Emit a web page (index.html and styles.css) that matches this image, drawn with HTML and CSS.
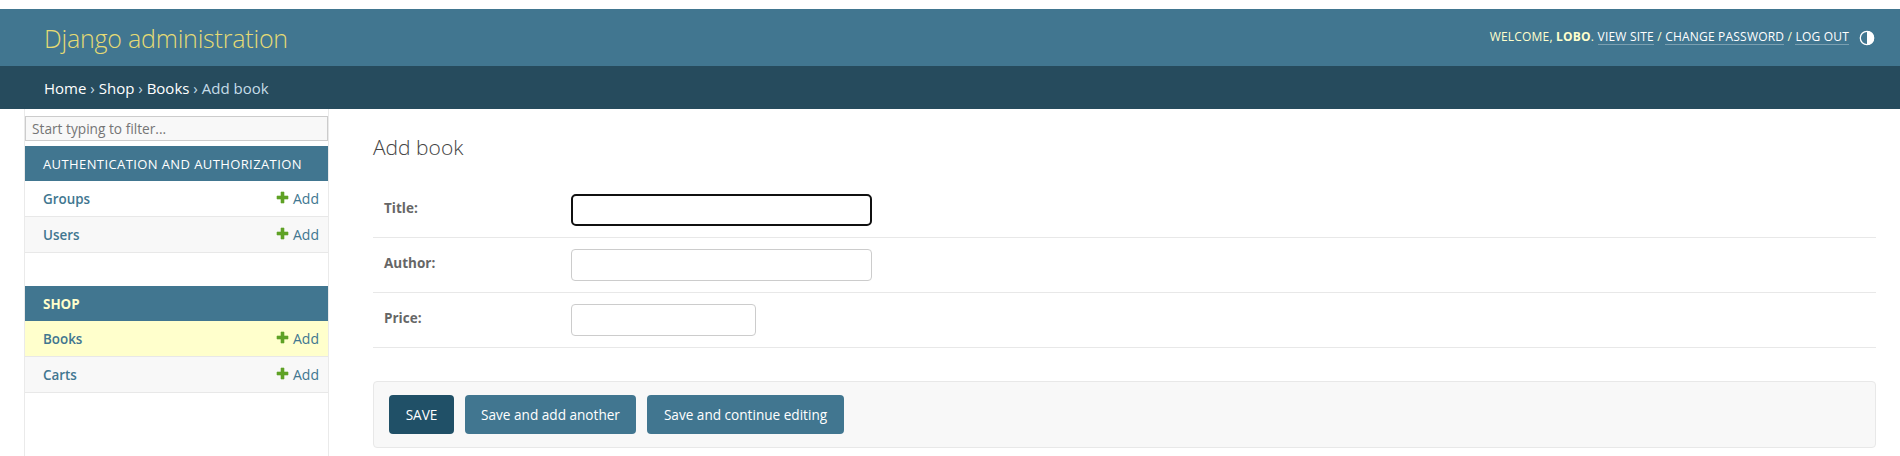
FILE: index.html
```html
<!DOCTYPE html>
<html lang="en">
<head>
<meta charset="utf-8">
<title>Add book | Django site admin</title>
<link rel="stylesheet" href="styles.css">
</head>
<body>
<svg class="defs" width="0" height="0"><symbol id="plus" viewBox="0 0 13 13"><path fill="#5fa225" d="M5 1h3v4h4v3H8v4H5V8H1V5h4z" stroke="#5fa225" stroke-width=".6" stroke-linejoin="round"/></symbol></svg>
<header class="header">
  <div class="branding"><span>Django administration</span></div>
  <div class="tools">
    <span class="welcome">WELCOME, <strong>LOBO</strong>. <a>VIEW SITE</a> / <a>CHANGE PASSWORD</a> / <a>LOG OUT</a></span>
    <svg class="theme" viewBox="0 0 16 16"><circle cx="8" cy="8" r="6.7" fill="none" stroke="#fff" stroke-width="1.3"/><path fill="#fff" d="M8 1a7 7 0 0 1 0 14z"/></svg>
  </div>
</header>
<nav class="breadcrumbs"><span><a>Home</a> › <a>Shop</a> › <a>Books</a> › Add book</span></nav>
<div class="main">
  <aside class="sidebar">
    <input class="filter" type="text" placeholder="Start typing to filter...">
    <section class="module">
      <h2 class="caption"><span class="cap-auth">AUTHENTICATION AND AUTHORIZATION</span></h2>
      <div class="row"><a class="model">Groups</a><a class="add"><svg class="plus"><use href="#plus"/></svg><span>Add</span></a></div>
      <div class="row alt"><a class="model">Users</a><a class="add"><svg class="plus"><use href="#plus"/></svg><span>Add</span></a></div>
    </section>
    <section class="module">
      <h2 class="caption section"><span>SHOP</span></h2>
      <div class="row current"><a class="model">Books</a><a class="add"><svg class="plus"><use href="#plus"/></svg><span>Add</span></a></div>
      <div class="row alt"><a class="model">Carts</a><a class="add"><svg class="plus"><use href="#plus"/></svg><span>Add</span></a></div>
    </section>
  </aside>
  <main class="content">
    <h1 class="title"><span>Add book</span></h1>
    <div class="field"><label>Title:</label><input class="text focused" type="text"></div>
    <div class="field"><label>Author:</label><input class="text" type="text"></div>
    <div class="field"><label>Price:</label><input class="text number" type="text"></div>
    <div class="submit">
      <button class="btn default"><span>SAVE</span></button>
      <button class="btn another"><span>Save and add another</span></button>
      <button class="btn continue"><span>Save and continue editing</span></button>
    </div>
  </main>
</div>
</body>
</html>
```
FILE: styles.css
```css
* { box-sizing: border-box; }
body { margin: 0; padding-top: 9px; height: 456px; overflow: hidden; background: #fff; color: #333; font: 14px/18px "Open Sans", "Noto Sans", sans-serif; display: flex; flex-direction: column; }
.defs { display: block; flex: none; height: 0; }
.header { flex: none; height: 57px; padding: 0 25px 0 44px; background: #417690; display: flex; justify-content: space-between; align-items: center; }
.branding { color: #e6db74; font-size: 25px; font-weight: 300; line-height: 32px; letter-spacing: -0.2px; padding-top: 1px; }
.tools { display: flex; align-items: center; color: #ffc; font-size: 12px; letter-spacing: 0.2px; margin-bottom: 1px; }
.welcome { white-space: nowrap; line-height: 14px; }
.tools a { display: inline-block; color: #fff; border-bottom: 1px solid rgba(255,255,255,.3); }
.theme { width: 16px; height: 16px; margin: 2px 0 0 10px; }
.breadcrumbs { flex: none; height: 43px; padding: 1px 44px 0; background: #264b5d; color: #c4dce8; display: flex; align-items: center; font-size: 15px; }
.breadcrumbs a { color: #fff; }
.main { flex: 1; display: flex; min-height: 0; }
.sidebar { flex: none; width: 305px; margin-left: 24px; border: solid #eaeaea; border-width: 0 1px; padding-top: 7px; }
.filter { display: block; width: 100%; height: 25px; margin-bottom: 5px; padding: 0 6px; border: 1px solid #ccc; background: #f8f8f8; font: 13.7px "Open Sans", sans-serif; }
.filter::placeholder { color: #757575; }
.module { margin-bottom: 33px; }
.caption { margin: 0; height: 35px; padding-left: 18px; background: #417690; color: #fff; font-size: 13px; font-weight: 400; letter-spacing: 0.4px; display: flex; align-items: center; }
.section { color: #ffc; font-weight: 700; font-size: 13.4px; letter-spacing: 0; }
.row { height: 36px; padding: 0 9px 0 18px; border-bottom: 1px solid #e8e8e8; display: flex; align-items: center; justify-content: space-between; color: #417690; }
.alt { background: #f8f8f8; }
.current { background: #ffc; }
.model { font-weight: 600; font-size: 13.4px; }
.add { display: flex; align-items: center; gap: 4px; font-size: 14px; }
.plus { width: 13px; height: 13px; margin-bottom: 3px; }
.content { flex: 1; min-width: 0; margin: 0 24px 0 44px; padding-top: 25px; }
.title { margin: 0 0 21px; height: 26px; font-size: 21px; line-height: 26px; font-weight: 300; color: #444; }
.field { height: 55px; padding: 11px 11px 0; border-bottom: 1px solid #e8e8e8; display: flex; }
.title + .field { height: 57px; padding-top: 13px; }
.field label { flex: none; width: 187px; padding-top: 5px; font-size: 13.5px; font-weight: 700; color: #666; }
.text { width: 301px; height: 32px; margin: 0; border: 1px solid #ccc; border-radius: 4px; background: #fff; outline: none; }
.focused { border: 2px solid #101010; border-radius: 5px; }
.number { width: 185px; }
.submit { margin-top: 33px; height: 67px; padding: 13px 15px; border: 1px solid #e8e8e8; border-radius: 4px; background: #f8f8f8; display: flex; gap: 11px; }
.btn { height: 39px; padding: 0 0 1px; border: 0; border-radius: 4px; background: #417690; color: #fff; font: 13.6px "Open Sans", sans-serif; white-space: nowrap; }
.default { width: 65px; background: #205067; }
.another { width: 171px; }
.continue { width: 197px; }
```
